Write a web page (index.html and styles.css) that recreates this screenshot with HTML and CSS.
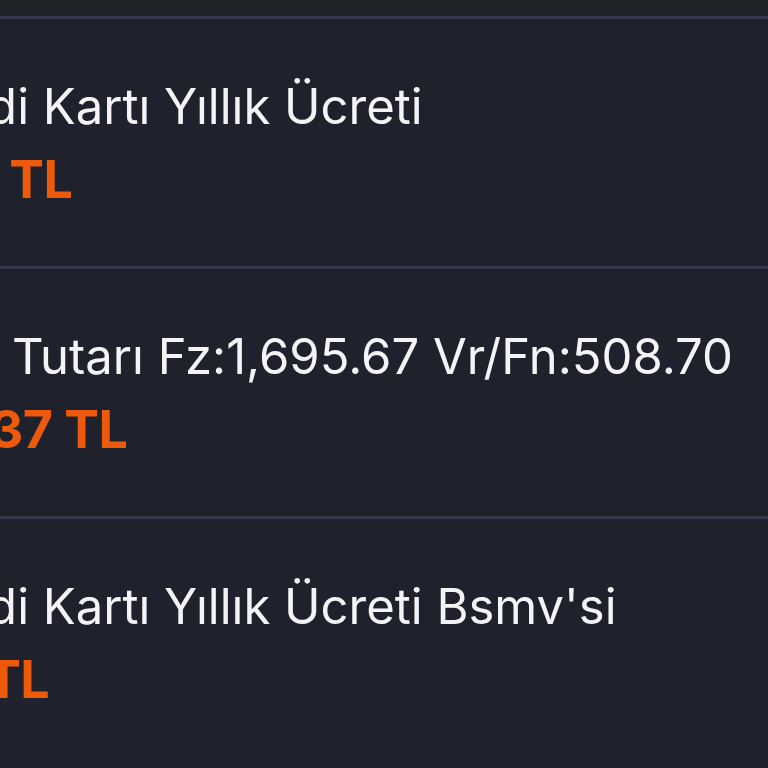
FILE: index.html
```html
<!DOCTYPE html>
<html lang="tr">
<head>
<meta charset="utf-8">
<link rel="stylesheet" href="styles.css">
</head>
<body>
<div class="screen">
  <div class="topband"></div>
  <ul class="list">
    <li class="row">
      <div class="title">Kredi Kartı Yıllık Ücreti</div>
      <div class="amount">310 TL</div>
    </li>
    <li class="row">
      <div class="title">Ana Tutarı Fz:1,695.67 Vr/Fn:508.70</div>
      <div class="amount">2,937 TL</div>
    </li>
    <li class="row">
      <div class="title">Kredi Kartı Yıllık Ücreti Bsmv'si</div>
      <div class="amount">2,1 TL</div>
    </li>
  </ul>
</div>
</body>
</html>
```

FILE: styles.css
```css
html, body {
  margin: 0;
  padding: 0;
  background: #1f212c;
  overflow: hidden;
}
.screen {
  width: 768px;
  height: 768px;
  overflow: hidden;
  background: #1f212c;
  font-family: Inter, "Noto Sans", sans-serif;
}
.topband {
  height: 16px;
  background: #1f2428;
}
.list {
  list-style: none;
  margin: 0;
  padding: 0;
}
.row {
  border-top: 3px solid #363a4a;
  height: 247px;
  margin-left: -92px;
  display: flex;
  flex-direction: column;
  white-space: nowrap;
}
.title {
  margin-top: 59px;
  font-size: 49px;
  line-height: 58px;
  color: #f4f4f6;
  font-weight: 400;
}
.amount {
  margin-top: 14px;
  font-size: 52px;
  line-height: 60px;
  color: #ee5a0c;
  font-weight: 700;
  letter-spacing: -0.5px;
}
```
